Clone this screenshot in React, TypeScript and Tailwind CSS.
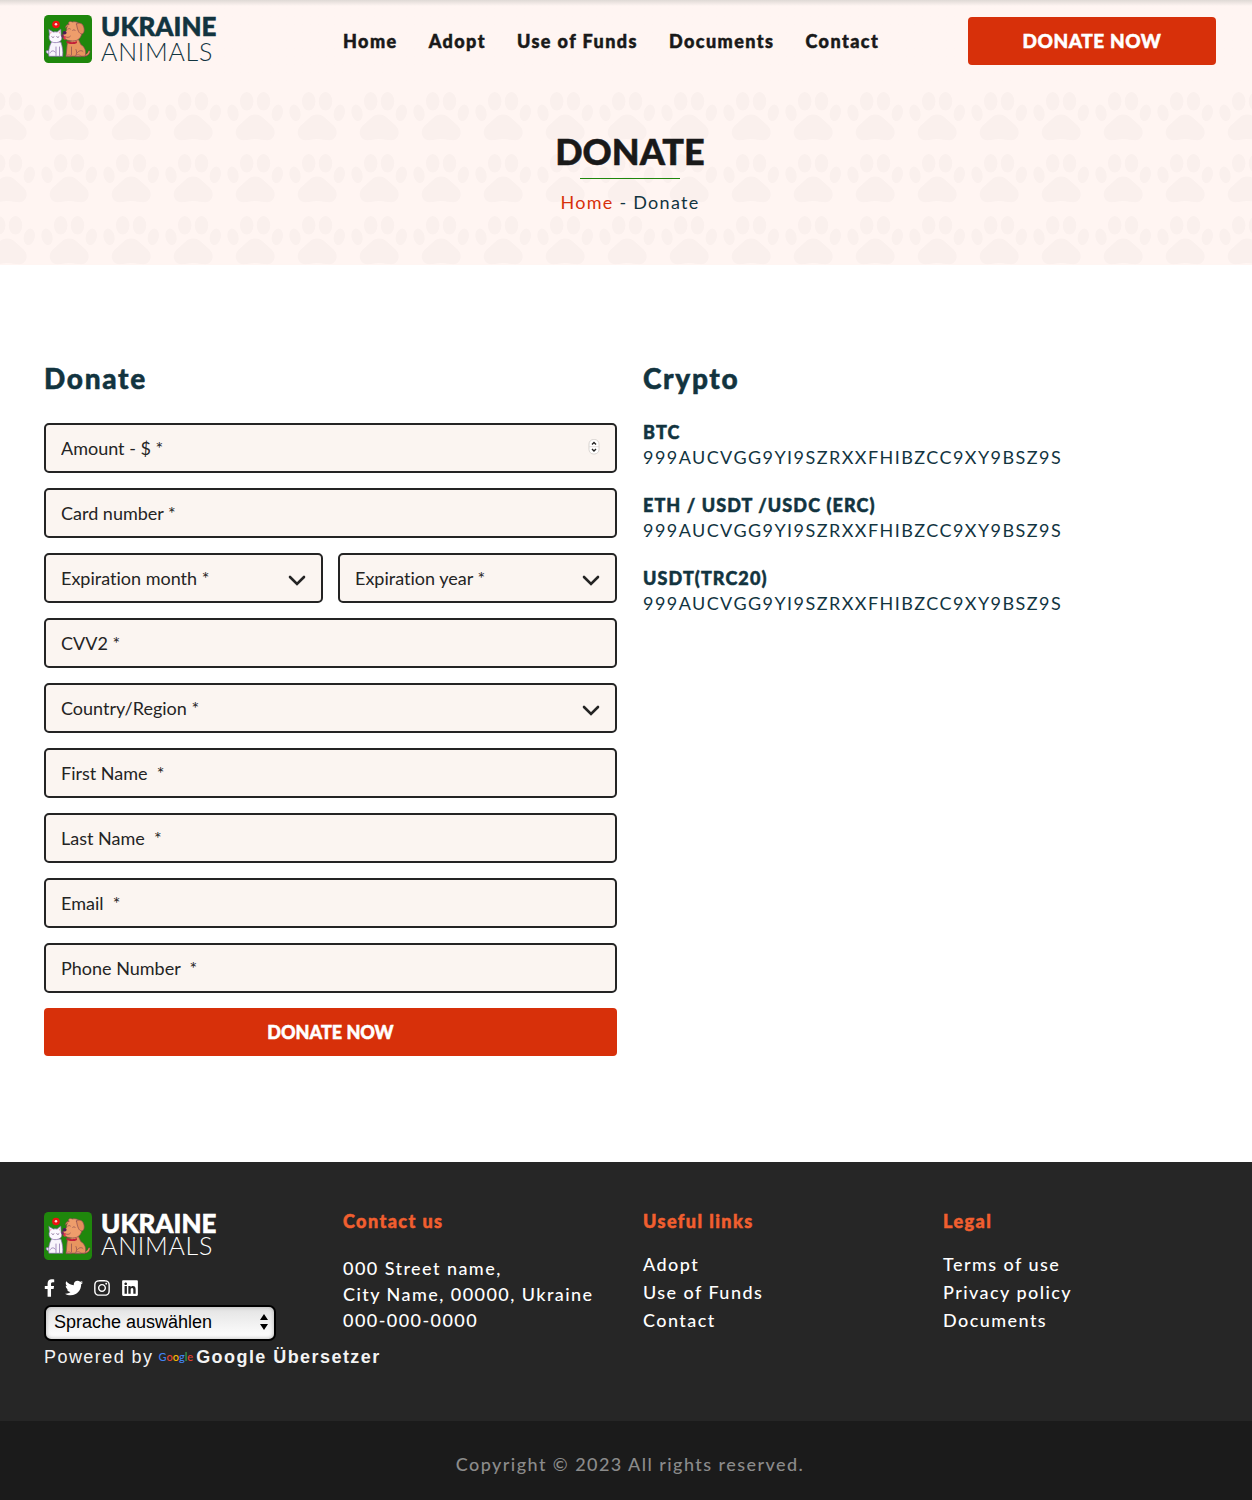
import React from "react";
import { FaFacebookF, FaTwitter, FaInstagram, FaLinkedin } from "react-icons/fa";

const container = "mx-auto w-full max-w-[1200px] px-[14px]";
const heavy = "font-black [-webkit-text-stroke:0.5px_currentColor]";
const field =
  "block h-[50px] w-full appearance-none rounded-[5px] border-2 border-[#242424] bg-[#fbf5f1] px-[15px] text-[18px] leading-6 text-[#242424] [font-variant-ligatures:none] placeholder:text-[#242424] placeholder:opacity-100";

function PetsMark() {
  return (
    <svg viewBox="0 0 48 48" className="size-12 shrink-0" aria-hidden="true">
      <rect width="48" height="48" rx="4.5" fill="#1f870c" />
      <circle cx="12" cy="9.5" r="3.8" fill="#ee1111" />
      <circle cx="12" cy="9.3" r="1.3" fill="#ffd9d9" />
      <g stroke="#8a4a50" strokeWidth="0.7" strokeLinejoin="round" strokeLinecap="round">
        <path d="M38 40c4 1.500 6.800-1 7.300-3.600" fill="none" stroke="#7a4350" strokeWidth="2.400" />
        <path d="M38 40c4 1.500 6.600-1 7.100-3.400" fill="none" stroke="#e89058" strokeWidth="1.300" />
        <path d="M23.500 27c-.8 5-.8 10-1.500 14.200h19c1.800-4.500-.2-9.500-4.200-11.700l-2.300-5z" fill="#e8955f" />
        <path d="M27.500 32v8M32 34.500c1 2 .8 4.500-.2 6M33.500 37.500c1.500-2 4-2.500 5.500-1" fill="none" />
        <path d="M22 41.300c0-1.700 5.500-1.700 5.500 0zM31 41.300c0-1.900 6-1.900 6 0z" fill="#f3b184" />
        <path d="M24.500 9c-.6-2 1.500-3.500 3.700-2C34 5.600 38.500 9.500 38 17c-.4 6-4.200 9-9.200 9-3.800 0-7.100-1-8.800-3.200-1.800-2.300.3-5.500 2.500-7.200 0-2 .5-5 2-6.600z" fill="#ee9d6b" />
        <path d="M32.500 9c3-2 6.200-.6 7.300 3.200 1 3.600 0 6.700-2.100 6.700-2.700 0-4.200-3.500-5.200-9.900z" fill="#e58f5c" />
        <path d="M25 9.500c-2.300-.6-3.300 1.300-3.600 3.500" fill="#e58f5c" />
        <path d="M23.800 14.300c.8-1 1.800-1 2.600-.3M28.700 15.300c.9-.8 2-.6 2.500.1" fill="none" />
        <path d="M21.500 21.800c1.700 1 3.700.8 4.900-.6" fill="none" />
      </g>
      <ellipse cx="20.600" cy="17.700" rx="2" ry="1.700" fill="#4b1e56" />
      <path d="M19.500 20.500l2.200 1.300-.5 3.200-1.800-.9z" fill="#e5304f" />
      <path d="M22.500 25.800c3 1.800 7.400 2 10.300.3l.2 1.800c-2.900 1.700-7.300 1.600-10.600-.2z" fill="#c3203a" />
      <g stroke="#8166a5" strokeWidth="0.7" strokeLinejoin="round" strokeLinecap="round">
        <path d="M6.500 39c-3 .3-5-1.500-4.200-3 .6-.9 2.300-.3 3.300.2" fill="#efe5f8" />
        <path d="M7.800 26.500c-1.800 3-3.900 8.500-2.900 14.800h13.800c.5-5-.2-9.500-1.700-14z" fill="#f8f5fc" />
        <path d="M12 32v8.500M15.500 32v8.500M6 38c1-2.500 4-3 5.200-.8" fill="none" />
        <path d="M5 14.500l4.300 2.600c1.300-.4 2.600-.4 3.800 0l3.700-3 .3 6.300c1.600 2.800.3 6-3.200 6.900-4 1-8-.3-8.700-3.600-.3-1.500-.2-3 .2-4z" fill="#fbf9fe" />
        <path d="M7.800 21.800c.7.800 1.500.8 2.200.1M12.700 21.800c.7.800 1.500.7 2.200 0" fill="none" stroke="#5a386f" />
      </g>
      <path d="M6.100 16.600l1.700 1-1.400 1.600zM16 16.300l.1 2.600-1.600-1.400z" fill="#f0a5b5" />
      <path d="M18.300 18.500l1.600 3-1.200 1.800-1.400-2z" fill="#6f2a61" />
    </svg>
  );
}

function Logo({ className, subLeading }: { className: string; subLeading: string }) {
  return (
    <a href="#" className={`flex h-12 w-fit gap-[9px] ${className}`}>
      <PetsMark />
      <span className="block">
        <span className={`block text-[26px] leading-[22px] tracking-normal ${heavy}`}>UKRAINE</span>
        <span className={`block text-[25px] font-light tracking-[0.03em] ${subLeading}`}>ANIMALS</span>
      </span>
    </a>
  );
}

function PawBackground() {
  return (
    <svg className="absolute inset-0 size-full" aria-hidden="true">
      <defs>
        <pattern id="paws" x="-24" y="4" width="62" height="62" patternUnits="userSpaceOnUse">
          <g fill="#faf0ed">
            <ellipse cx="22.700" cy="16.300" rx="6.700" ry="9.300" />
            <ellipse cx="39.500" cy="16.300" rx="6.700" ry="9.300" />
            <ellipse cx="9" cy="27.800" rx="5.500" ry="8.300" transform="rotate(-13 9 27.800)" />
            <ellipse cx="53.300" cy="27.800" rx="5.500" ry="8.300" transform="rotate(13 53.300 27.800)" />
            <path d="M31.200 29.500c3.500 0 6 1.600 8.600 4l8 7.300c4.300 4.200 3.600 10.700-.8 13.500-4.300 2.400-8.300-.3-15.800-.3s-11.500 2.700-15.800.3c-4.400-2.800-5.100-9.300-.8-13.500l8-7.300c2.600-2.400 5.100-4 8.600-4z" />
          </g>
        </pattern>
      </defs>
      <rect width="100%" height="100%" fill="url(#paws)" />
    </svg>
  );
}

function Chevron() {
  return (
    <svg viewBox="0 0 18 12" className="pointer-events-none absolute top-[22px] right-[17px] h-3 w-[18px]" aria-hidden="true">
      <path d="M2 2l7 7 7-7" fill="none" stroke="#242424" strokeWidth="2.600" strokeLinecap="round" strokeLinejoin="miter" />
    </svg>
  );
}

function SelectField({ label }: { label: string }) {
  return (
    <div className="relative">
      <select aria-label={label} className={field}>
        <option>{label}</option>
      </select>
      <Chevron />
    </div>
  );
}

function TextField({ label, type = "text" }: { label: string; type?: string }) {
  return <input type={type} aria-label={label} placeholder={label} className={field} />;
}

const nav = ["Home", "Adopt", "Use of Funds", "Documents", "Contact"];
const wallets = ["BTC", "ETH / USDT /USDC (ERC)", "USDT(TRC20)"];
const socials = [
  { name: "Facebook", Icon: FaFacebookF, size: "h-[18px] w-[11px]" },
  { name: "Twitter", Icon: FaTwitter, size: "size-[18px]" },
  { name: "Instagram", Icon: FaInstagram, size: "size-[18px]" },
  { name: "LinkedIn", Icon: FaLinkedin, size: "size-[18px]" },
];

function FooterHeading({ children }: { children: string }) {
  return <h3 className={`leading-[18px] text-[#f15f2f] ${heavy}`}>{children}</h3>;
}

function LinkColumn({ title, links }: { title: string; links: string[] }) {
  return (
    <div>
      <FooterHeading>{title}</FooterHeading>
      <ul className="mt-5 leading-7 font-medium">
        {links.map((l) => (
          <li key={l}>
            <a href="#">{l}</a>
          </li>
        ))}
      </ul>
    </div>
  );
}

export default function App() {
  return (
    <div className="bg-white font-['Lato',sans-serif] text-[18px] tracking-[0.08em] text-[#12343f]">
      <header className="bg-[#fff5f2] bg-linear-to-b from-[#dfd9d5] to-[#fff5f2] to-[6px] pl-2">
        <div className={`${container} flex items-start pt-[15px] pb-4`}>
          <div className="w-[299px] shrink-0">
            <Logo className="text-[#12343f]" subLeading="leading-[28px]" />
          </div>
          <nav className={`flex gap-[31px] pt-3 leading-7 text-[#191919] ${heavy}`}>
            {nav.map((n) => (
              <a key={n} href="#" className="whitespace-nowrap">
                {n}
              </a>
            ))}
          </nav>
          <a
            href="#donate"
            className={`mt-[2px] ml-auto flex h-12 w-[248px] items-center justify-center rounded-[4px] bg-[#d7300a] text-[19px] tracking-[0.03em] text-white ${heavy}`}
          >
            DONATE NOW
          </a>
        </div>
      </header>

      <section className="relative overflow-hidden bg-[#fff5f2] pl-2">
        <PawBackground />
        <div className="relative flex flex-col items-center pt-[49px] pb-[51px]">
          <h1 className={`text-[36px] leading-[42px] tracking-normal text-[#191919] ${heavy}`}>DONATE</h1>
          <div className="mt-[6px] h-px w-[100px] bg-[#1f870c]" />
          <p className="mt-[11px] leading-6 tracking-[0.07em]">
            <a href="#" className="text-[#d7300a]">
              Home
            </a>{" "}
            - Donate
          </p>
        </div>
      </section>

      <main className="pl-2">
        <div className={`${container} grid grid-cols-2 gap-[26px] pt-[95px] pb-[106px]`}>
          <section>
            <h2 className={`text-[28px] leading-9 tracking-[0.06em] ${heavy}`}>Donate</h2>
            <form id="donate" className="mt-[27px] flex flex-col gap-[15px] tracking-normal">
              <div className="relative">
                <input
                  type="number"
                  aria-label="Amount - $ *"
                  placeholder="Amount - $ *"
                  className={`${field} [appearance:textfield] [&::-webkit-inner-spin-button]:appearance-none`}
                />
                <svg viewBox="0 0 12 18" className="pointer-events-none absolute top-[15px] right-[17px] h-[18px] w-3" aria-hidden="true">
                  <rect x="1" y="1.500" width="10" height="14.500" rx="4.500" fill="#fff" stroke="#cfcac7" strokeWidth=".8" />
                  <path d="M1 8.700h10" stroke="#ddd8d5" strokeWidth=".8" />
                  <path d="M4 6.600l2-2 2 2M4 11l2 2 2-2" fill="none" stroke="#222" strokeWidth="1.400" />
                </svg>
              </div>
              <TextField label="Card number *" />
              <div className="grid grid-cols-2 gap-[15px]">
                <SelectField label="Expiration month *" />
                <SelectField label="Expiration year *" />
              </div>
              <TextField label="CVV2 *" />
              <SelectField label="Country/Region *" />
              <TextField label={"First Name \u00a0*"} />
              <TextField label={"Last Name \u00a0*"} />
              <TextField label={"Email \u00a0*"} type="email" />
              <TextField label={"Phone Number \u00a0*"} type="tel" />
              <button type="button" className={`h-12 rounded-[4px] bg-[#d7300a] text-[18px] text-white ${heavy}`}>
                DONATE NOW
              </button>
            </form>
          </section>

          <section>
            <h2 className={`text-[28px] leading-9 tracking-[0.06em] ${heavy}`}>Crypto</h2>
            <dl className="mt-6 flex flex-col gap-[23px] leading-[25px]">
              {wallets.map((w) => (
                <div key={w}>
                  <dt className={`tracking-[0.06em] ${heavy}`}>{w}</dt>
                  <dd>999AUCVGG9YI9SZRXXFHIBZCC9XY9BSZ9S</dd>
                </div>
              ))}
            </dl>
          </section>
        </div>
      </main>

      <footer className="bg-[#262626] text-white">
        <div className="pl-2">
          <div className={`${container} grid grid-cols-4 pt-[50px] pb-[52px]`}>
            <div>
              <Logo className="text-white" subLeading="leading-[22px]" />
              <div className="mt-[19px] flex items-center gap-[10px]">
                {socials.map(({ name, Icon, size }) => (
                  <a key={name} href="#" aria-label={name}>
                    <Icon className={size} />
                  </a>
                ))}
              </div>
              <div className="relative mt-2 w-[232px]">
                <select
                  aria-label="Sprache auswählen"
                  className="block h-9 w-full appearance-none rounded-[7px] border-2 border-black bg-linear-to-b from-[#e3e3e3] to-white px-2 pb-[2px] font-['Liberation_Sans',sans-serif] text-[18px] tracking-normal text-black shadow-[inset_0_0_4px_#aaa]"
                >
                  <option>Sprache auswählen</option>
                </select>
                <svg viewBox="0 0 10 18" className="pointer-events-none absolute top-2 right-[7px] h-[18px] w-[10px]" aria-hidden="true">
                  <path d="M5 1l4 6H1zM5 17l4-6H1z" fill="#000" />
                </svg>
              </div>
              <p className="mt-1 flex items-center font-['Liberation_Sans',sans-serif] leading-6 whitespace-nowrap text-[#f3f3f3]">
                Powered by
                <a href="#" className="ml-[5px] flex items-center gap-[3px] font-bold">
                  <span className="font-['Lato',sans-serif] text-[11px] font-medium tracking-normal" aria-label="Google">
                    <span className="text-[#4285f4]">G</span>
                    <span className="text-[#ea4335]">o</span>
                    <span className="text-[#fbbc05]">o</span>
                    <span className="text-[#4285f4]">g</span>
                    <span className="text-[#34a853]">l</span>
                    <span className="text-[#ea4335]">e</span>
                  </span>
                  Google Übersetzer
                </a>
              </p>
            </div>
            <div className="pl-[6px]">
              <FooterHeading>Contact us</FooterHeading>
              <address className="mt-[25px] leading-[26px] font-medium whitespace-nowrap not-italic">
                000 Street name,
                <br />
                City Name, 00000, Ukraine
                <br />
                000-000-0000
              </address>
            </div>
            <div className="pl-[13px]">
              <LinkColumn title="Useful links" links={["Adopt", "Use of Funds", "Contact"]} />
            </div>
            <div className="pl-5">
              <LinkColumn title="Legal" links={["Terms of use", "Privacy policy", "Documents"]} />
            </div>
          </div>
        </div>
        <div className="bg-[#1b1b1b] pt-[31px] pb-6 pl-2 text-center leading-6 font-medium text-[#8b8b8b]">
          Copyright © 2023 All rights reserved.
        </div>
      </footer>
    </div>
  );
}
